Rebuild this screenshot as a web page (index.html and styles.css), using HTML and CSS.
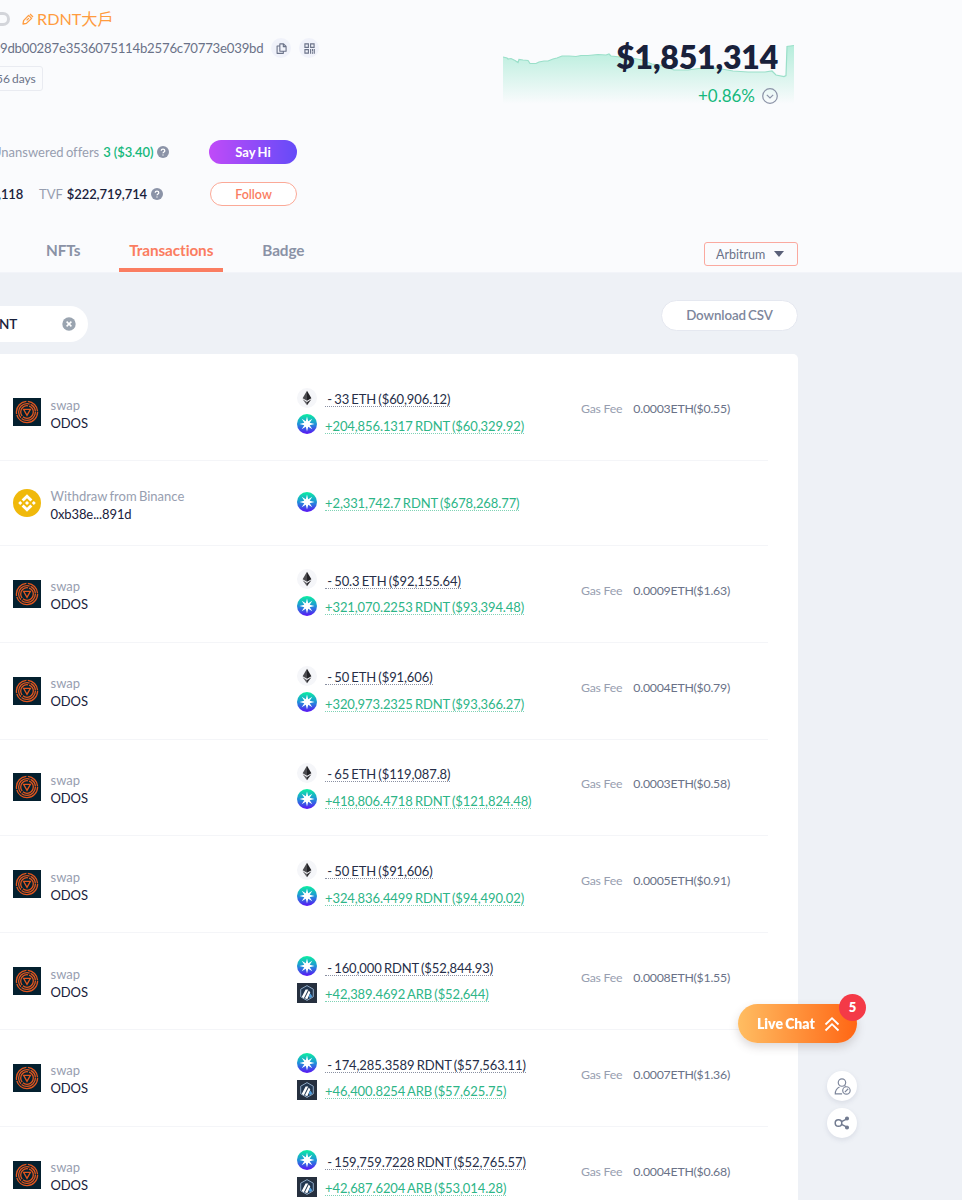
FILE: index.html
```
<!DOCTYPE html>
<html lang="en">
  <head>
    <meta charset="utf-8" />
    <link rel="stylesheet" href="styles.css">
    <title>Transactions</title>
  </head>
  <body>
    <svg class="sprite" aria-hidden="true">
      <defs>
        <linearGradient id="rdnt-bg" x1="0" y1="0" x2="0" y2="1">
          <stop offset="0" stop-color="#0bf0a0" />
          <stop offset="0.5" stop-color="#1f92d8" />
          <stop offset="1" stop-color="#5a12f5" />
        </linearGradient>
        <symbol id="odos" viewBox="0 0 28 28">
          <rect width="28" height="28" fill="#04202f" />
          <g fill="none" stroke="#e0561f" stroke-width="1.3">
            <circle cx="14" cy="14" r="10.6" stroke-dasharray="30 1 18 1.5 15 1" />
            <circle cx="14" cy="14" r="8.4" stroke-dasharray="19 1 22 1 9 1" />
            <circle cx="14" cy="14" r="6.3" stroke-dasharray="14 1 15 1 8 1" />
            <path d="M10.6 11.4h6.8L14 17.4z" />
          </g>
        </symbol>
        <symbol id="binance" viewBox="0 0 28 28">
          <circle cx="14" cy="14" r="14" fill="#f0b90b" />
          <path fill="#fff" d="M14 5.2l5.4 5.4-2 2L14 9.2l-3.4 3.4-2-2zM14 22.8l-5.4-5.4 2-2 3.4 3.4 3.4-3.4 2 2zM7.2 12L9.2 14l-2 2-2-2zM20.8 12l2 2-2 2-2-2zM14 12l2 2-2 2-2-2z" />
        </symbol>
        <symbol id="eth" viewBox="0 0 20 20">
          <circle cx="10" cy="10" r="10" fill="#f5f6f9" />
          <path fill="#4b4b4f" d="M10 2.8L5.6 10.2 10 12.8z" />
          <path fill="#222226" d="M10 2.8l4.4 7.4L10 12.8z" />
          <path fill="#66666a" d="M5.6 11.3L10 17.3v-3.4z" />
          <path fill="#303034" d="M14.4 11.3L10 17.3v-3.4z" />
        </symbol>
        <symbol id="rdnt" viewBox="0 0 20 20">
          <circle cx="10" cy="10" r="10" fill="url(#rdnt-bg)" />
          <path fill="#fff" d="M10 2.5l1.2 4.8 4.1-2.6-2.6 4.1 4.8 1.2-4.8 1.2 2.6 4.1-4.1-2.6L10 17.5l-1.2-4.8-4.1 2.6 2.6-4.1L2.5 10l4.8-1.2-2.6-4.1 4.1 2.6z" />
        </symbol>
        <symbol id="arb" viewBox="0 0 20 20">
          <rect width="20" height="20" fill="#26303f" />
          <path d="M10 2.6l6.3 3.6v7.6L10 17.4l-6.3-3.6V6.2z" fill="#22364f" stroke="#8fa9c4" stroke-width="1" />
          <path d="M8.6 6.6h2.6L6.9 15.2l-2.2-1.1zM11.8 7.4l1.5 2-3 6.8-2.4-1z" fill="#fff" />
          <path d="M13.4 10.4l2 3.2-2.6 1.7-1-2z" fill="#4f9fe0" />
        </symbol>
        <symbol id="help" viewBox="0 0 12 12">
          <circle cx="6" cy="6" r="6" fill="#8b93a7" />
          <path d="M4.2 4.8c0-2.3 3.6-2.3 3.6 0C7.8 6 6 6 6 7.3M6 8.4v1.2" fill="none" stroke="#fff" stroke-width="1.3" />
        </symbol>
      </defs>
    </svg>

    <header class="header">
      <div class="profile">
        <div class="name-row">
          <span class="id-tag"></span>
          <svg class="edit-icon" viewBox="0 0 12 12" fill="none" stroke="#ff9c3f" stroke-width="1.3" stroke-linejoin="round">
            <path d="M1 11l.6-3.4L6.6 2.4l3 3L4.4 10.4zM4.6 7.4l2.3-2.3M8 1l3 3" />
          </svg>
          <span class="nickname">RDNT大戶</span>
        </div>
        <div class="address-row">
          <span class="address">9db00287e3536075114b2576c70773e039bd</span>
          <span class="round-icon">
            <svg viewBox="0 0 12 12" width="11" height="11" fill="none" stroke="#6a7288" stroke-width="1.2" stroke-linejoin="round">
              <path d="M4.2 1h4L11 3.7V9H4.2zM8 1v3h3M4.2 3.2H1.2V11.3H8V9" />
            </svg>
          </span>
          <span class="round-icon">
            <svg viewBox="0 0 12 12" width="11" height="11" fill="none" stroke="#6a7288" stroke-width="1.2">
              <path d="M1 1h3.8v3.8H1zM7.2 1H11v3.8H7.2zM1 7.2h3.8V11H1zM7.2 6.6V11.6M9.3 6.6v2.6M9.3 10.2v1.4M11.2 6.6v5" />
            </svg>
          </span>
        </div>
        <div class="days">56 days</div>
        <div class="stat-row offers">
          <span class="stat-label">Unanswered offers</span>
          <span class="stat-value green">3 ($3.40)</span>
          <svg class="help"><use href="#help" /></svg>
          <button class="btn say-hi">Say Hi</button>
        </div>
        <div class="stat-row tvf">
          <span class="stat-value followers">,118</span>
          <span class="stat-label">TVF</span>
          <span class="stat-value">$222,719,714</span>
          <svg class="help"><use href="#help" /></svg>
          <button class="btn follow">Follow</button>
        </div>
      </div>

      <div class="balance">
        <svg class="chart" viewBox="0 0 291 65">
          <defs>
            <linearGradient id="area" x1="0" y1="0" x2="0" y2="1">
              <stop offset="0" stop-color="#b5eddb" />
              <stop offset="1" stop-color="#fafbfd" />
            </linearGradient>
          </defs>
          <path fill="url(#area)" d="M0 17l4 1 1 1 3-.5 4 2 3 2 1-3 4 .5 5 .5 2 3 6 0 3-1.5 5-1 4 0 5-2 4-1 5-2 7 0 7 .5 5-1 7 0 10-1 8 .5 3-1 2 2 9 1 12 1 10 2 10 4 8 1 14 5 14 0 14-2 14 0 17 3 15 1 17 0 7-1 4 4 8 1.5 2-1 1-29 7-1V64H0z" />
          <path fill="none" stroke="#9adfc9" stroke-width="1.2" d="M0 17l4 1 1 1 3-.5 4 2 3 2 1-3 4 .5 5 .5 2 3 6 0 3-1.5 5-1 4 0 5-2 4-1 5-2 7 0 7 .5 5-1 7 0 10-1 8 .5 3-1 2 2 9 1 12 1 10 2 10 4 8 1 14 5 14 0 14-2 14 0 17 3 15 1 17 0 7-1 4 4 8 1.5 2-1 1-29 7-1" />
        </svg>
        <div class="total">$1,851,314</div>
        <div class="change">
          <span>+0.86%</span>
          <svg viewBox="0 0 16 16" width="16" height="16" fill="none" stroke="#8b93a7" stroke-width="1.2">
            <circle cx="8" cy="8" r="7.3" />
            <path d="M4.8 6.9L8 10l3.2-3.1" />
          </svg>
        </div>
      </div>

      <nav class="tabs">
        <a class="tab">NFTs</a>
        <a class="tab active">Transactions</a>
        <a class="tab">Badge</a>
        <div class="chain">Arbitrum <span class="caret"></span></div>
      </nav>
    </header>

    <main>
      <div class="toolbar">
        <div class="search">
          <span>NT</span>
          <svg viewBox="0 0 14 14" width="14" height="14">
            <circle cx="7" cy="7" r="6.7" fill="#9aa4b0" />
            <path d="M4.6 4.6l4.8 4.8M9.4 4.6L4.6 9.4" stroke="#fff" stroke-width="1.5" />
          </svg>
        </div>
        <button class="download">Download CSV</button>
      </div>

      <div class="list">
        <div class="row">
          <svg class="logo"><use href="#odos" /></svg>
          <div class="action"><span>swap</span><b>ODOS</b></div>
          <div class="tokens">
            <div class="token"><svg><use href="#eth" /></svg><span>&nbsp;- 33 ETH ($60,906.12)</span></div>
            <div class="token in"><svg><use href="#rdnt" /></svg><span>+204,856.1317 RDNT ($60,329.92)</span></div>
          </div>
          <div class="gas"><span>Gas Fee</span>0.0003ETH($0.55)</div>
        </div>
        <div class="row short">
          <svg class="logo"><use href="#binance" /></svg>
          <div class="action"><span>Withdraw from Binance</span><b>0xb38e...891d</b></div>
          <div class="tokens">
            <div class="token in"><svg><use href="#rdnt" /></svg><span>+2,331,742.7 RDNT ($678,268.77)</span></div>
          </div>
        </div>
        <div class="row">
          <svg class="logo"><use href="#odos" /></svg>
          <div class="action"><span>swap</span><b>ODOS</b></div>
          <div class="tokens">
            <div class="token"><svg><use href="#eth" /></svg><span>&nbsp;- 50.3 ETH ($92,155.64)</span></div>
            <div class="token in"><svg><use href="#rdnt" /></svg><span>+321,070.2253 RDNT ($93,394.48)</span></div>
          </div>
          <div class="gas"><span>Gas Fee</span>0.0009ETH($1.63)</div>
        </div>
        <div class="row">
          <svg class="logo"><use href="#odos" /></svg>
          <div class="action"><span>swap</span><b>ODOS</b></div>
          <div class="tokens">
            <div class="token"><svg><use href="#eth" /></svg><span>&nbsp;- 50 ETH ($91,606)</span></div>
            <div class="token in"><svg><use href="#rdnt" /></svg><span>+320,973.2325 RDNT ($93,366.27)</span></div>
          </div>
          <div class="gas"><span>Gas Fee</span>0.0004ETH($0.79)</div>
        </div>
        <div class="row">
          <svg class="logo"><use href="#odos" /></svg>
          <div class="action"><span>swap</span><b>ODOS</b></div>
          <div class="tokens">
            <div class="token"><svg><use href="#eth" /></svg><span>&nbsp;- 65 ETH ($119,087.8)</span></div>
            <div class="token in"><svg><use href="#rdnt" /></svg><span>+418,806.4718 RDNT ($121,824.48)</span></div>
          </div>
          <div class="gas"><span>Gas Fee</span>0.0003ETH($0.58)</div>
        </div>
        <div class="row">
          <svg class="logo"><use href="#odos" /></svg>
          <div class="action"><span>swap</span><b>ODOS</b></div>
          <div class="tokens">
            <div class="token"><svg><use href="#eth" /></svg><span>&nbsp;- 50 ETH ($91,606)</span></div>
            <div class="token in"><svg><use href="#rdnt" /></svg><span>+324,836.4499 RDNT ($94,490.02)</span></div>
          </div>
          <div class="gas"><span>Gas Fee</span>0.0005ETH($0.91)</div>
        </div>
        <div class="row">
          <svg class="logo"><use href="#odos" /></svg>
          <div class="action"><span>swap</span><b>ODOS</b></div>
          <div class="tokens">
            <div class="token"><svg><use href="#rdnt" /></svg><span>&nbsp;- 160,000 RDNT ($52,844.93)</span></div>
            <div class="token in"><svg><use href="#arb" /></svg><span>+42,389.4692 ARB ($52,644)</span></div>
          </div>
          <div class="gas"><span>Gas Fee</span>0.0008ETH($1.55)</div>
        </div>
        <div class="row">
          <svg class="logo"><use href="#odos" /></svg>
          <div class="action"><span>swap</span><b>ODOS</b></div>
          <div class="tokens">
            <div class="token"><svg><use href="#rdnt" /></svg><span>&nbsp;- 174,285.3589 RDNT ($57,563.11)</span></div>
            <div class="token in"><svg><use href="#arb" /></svg><span>+46,400.8254 ARB ($57,625.75)</span></div>
          </div>
          <div class="gas"><span>Gas Fee</span>0.0007ETH($1.36)</div>
        </div>
        <div class="row">
          <svg class="logo"><use href="#odos" /></svg>
          <div class="action"><span>swap</span><b>ODOS</b></div>
          <div class="tokens">
            <div class="token"><svg><use href="#rdnt" /></svg><span>&nbsp;- 159,759.7228 RDNT ($52,765.57)</span></div>
            <div class="token in"><svg><use href="#arb" /></svg><span>+42,687.6204 ARB ($53,014.28)</span></div>
          </div>
          <div class="gas"><span>Gas Fee</span>0.0004ETH($0.68)</div>
        </div>
      </div>
    </main>

    <div class="floating">
      <button class="chat">
        Live Chat
        <svg viewBox="0 0 16 16" width="16" height="16" fill="none" stroke="#fff" stroke-width="1.8">
          <path d="M1.5 8.5L8 2.2l6.5 6.3M1.5 14.5L8 8.2l6.5 6.3" />
        </svg>
        <span class="badge">5</span>
      </button>
      <button class="circle">
        <svg viewBox="0 0 16 16" width="17" height="17" fill="none" stroke="#7d869b" stroke-width="1.1">
          <circle cx="7.5" cy="4.3" r="3.5" />
          <path d="M7.6 15H1.2c0-3 1.3-5.4 4-6.6M10 7.2l1 .8" />
          <circle cx="11.7" cy="11.7" r="3.5" />
          <path d="M10.2 13.3l3.2-3.2" />
        </svg>
      </button>
      <button class="circle">
        <svg viewBox="0 0 16 16" width="16" height="16" fill="none" stroke="#727b90" stroke-width="1.5">
          <circle cx="4.5" cy="8" r="3.3" />
          <path d="M7.5 6.7L13 3.8M7.5 9.3l5.5 2.9" />
          <circle cx="13" cy="3.5" r="1.3" fill="#727b90" />
          <circle cx="13" cy="12.5" r="1.3" fill="#727b90" />
        </svg>
      </button>
    </div>
  </body>
</html>
```
FILE: styles.css
```
* {
  box-sizing: border-box;
}
body {
  margin: 0;
  height: 1200px;
  overflow: hidden;
  background-color: #eef1f6;
  color: #19213b;
  font-family: Lato, "Noto Sans CJK TC", sans-serif;
  font-size: 13.5px;
  font-variant-ligatures: none;
  word-spacing: -1px;
}
button {
  font-family: inherit;
  padding: 0;
  word-spacing: -1px;
  cursor: pointer;
}
.sprite {
  display: block;
  width: 0;
  height: 0;
}

.header {
  display: grid;
  grid-template-columns: 503px 291px;
  grid-template-rows: 229px 43px;
  height: 273px;
  background-color: #fafbfd;
  border-bottom: 1px solid #f2f4f9;
}
.name-row {
  display: flex;
  align-items: center;
  height: 38px;
}
.id-tag {
  width: 10px;
  height: 14px;
  border: 3px solid #d3d5da;
  border-left: 0;
  border-radius: 0 7px 7px 0;
}
.edit-icon {
  width: 12px;
  height: 12px;
  margin-left: 12px;
  margin-right: 3px;
}
.nickname {
  margin-top: -2px;
  font-size: 16.2px;
  color: #ff9c3f;
}
.address-row {
  display: flex;
  align-items: center;
  height: 20px;
  color: #6a7288;
}
.address {
  width: 271px;
  font-size: 13.2px;
  letter-spacing: -0.22px;
}
.round-icon {
  display: flex;
  align-items: center;
  justify-content: center;
  width: 20px;
  height: 20px;
  margin-right: 8px;
  border-radius: 50%;
  background-color: #f0f2fa;
}
.days {
  display: flex;
  align-items: center;
  width: 55px;
  height: 25px;
  margin: 8px 0 0 -12px;
  padding-left: 7px;
  border: 1px solid #e9ebf1;
  border-radius: 3px;
  font-size: 12px;
  color: #6a7288;
}
.stat-row {
  display: flex;
  align-items: center;
  width: 297px;
  height: 24px;
}
.offers {
  margin-top: 49px;
  margin-left: -8px;
  width: 305px;
}
.tvf {
  margin-top: 18px;
}
.stat-label {
  margin-right: 4px;
  font-size: 13px;
  color: #979eb0;
}
.stat-value {
  font-size: 13px;
  font-weight: 600;
  letter-spacing: -0.1px;
}
.followers {
  width: 41px;
  margin-left: -2px;
}
.green {
  color: #15b87c;
  word-spacing: 0;
}
.help {
  width: 12px;
  height: 12px;
  margin-left: 4px;
}
.btn {
  width: 88px;
  height: 24px;
  margin-left: auto;
  border: 0;
  border-radius: 12px;
  font-size: 13px;
  font-weight: 700;
}
.say-hi {
  color: #fff;
  background: linear-gradient(90deg, #c04bf8, #654bf8);
}
.follow {
  width: 87px;
  color: #fa7d61;
  background-color: #fff;
  border: 1px solid #fba997;
  font-size: 12.5px;
  font-weight: 600;
}

.balance {
  position: relative;
  padding: 36px 16px 0 0;
  text-align: right;
}
.chart {
  position: absolute;
  top: 40px;
  left: 0;
  width: 291px;
  height: 65px;
}
.total {
  position: relative;
  height: 42px;
  line-height: 42px;
  font-size: 32px;
  font-weight: 800;
  letter-spacing: -0.2px;
}
.change {
  position: relative;
  display: flex;
  align-items: center;
  justify-content: flex-end;
  gap: 7px;
  height: 35px;
  font-size: 17px;
  color: #15b87c;
}

.tabs {
  grid-column: 1 / 3;
  display: flex;
  width: 798px;
  padding-left: 36px;
}
.tab {
  height: 43px;
  margin-right: 29px;
  padding: 0 10px;
  line-height: 43px;
  font-size: 15.3px;
  font-weight: 700;
  letter-spacing: -0.1px;
  color: #8a92a6;
}
.active {
  color: #fa7d61;
  border-bottom: 4px solid #fa7d61;
}
.chain {
  display: flex;
  align-items: center;
  justify-content: space-between;
  width: 94px;
  height: 24px;
  margin: 13px 0 0 auto;
  padding: 0 13px 0 11px;
  border: 1px solid #faa99f;
  border-radius: 3px;
  font-size: 12.5px;
  color: #6a7288;
}
.caret {
  border: 5.5px solid transparent;
  border-top: 6px solid #596078;
  border-bottom: 0;
}

.toolbar {
  display: flex;
  justify-content: space-between;
  width: 798px;
  height: 81px;
  padding-top: 27px;
}
.search {
  display: flex;
  align-items: center;
  justify-content: space-between;
  width: 89px;
  height: 36px;
  margin-top: 6px;
  margin-left: -1px;
  padding-right: 12px;
  border-radius: 0 18px 18px 0;
  background-color: #fff;
  font-weight: 600;
}
.download {
  width: 137px;
  height: 31px;
  padding-bottom: 2px;
  border: 1px solid #e5e8f0;
  border-radius: 16px;
  background-color: #fff;
  color: #7d869b;
  font-size: 13.3px;
  font-weight: 600;
  letter-spacing: -0.1px;
}

.list {
  width: 798px;
  padding: 10.5px 30px 0 0;
  border-radius: 0 5px 0 0;
  background-color: #fff;
}
.row {
  display: grid;
  grid-template-columns: 28px 246.5px 284px 187px;
  align-items: center;
  height: 96.85px;
  padding-left: 13px;
  border-bottom: 1px solid #f4f5f8;
}
.short {
  height: 84.5px;
}
.logo {
  width: 28px;
  height: 28px;
}
.action {
  padding: 3px 0 0 9.5px;
  font-size: 13px;
  line-height: 18px;
}
.action span,
.action b {
  display: block;
  font-weight: 400;
}
.action b {
  letter-spacing: -0.1px;
}
.action span {
  color: #979eb0;
}
.tokens {
  padding: 0 0 1.5px 9.5px;
}
.token {
  display: flex;
  gap: 8px;
  height: 26.5px;
}
.token svg {
  flex: none;
  width: 20px;
  height: 20px;
  margin-top: 2.5px;
}
.token span {
  height: 16px;
  margin-top: 6px;
  line-height: 17px;
  font-size: 13px;
  letter-spacing: -0.1px;
  word-spacing: -1px;
  white-space: nowrap;
  color: #262e48;
  border-bottom: 1px dotted #8a90a2;
}
.in span {
  color: #2db587;
  border-bottom-color: #7fd2b5;
}
.gas {
  padding: 0 0 7px 9.5px;
  font-size: 12.3px;
  letter-spacing: -0.23px;
  color: #6a7288;
}
.gas span {
  margin-right: 11px;
  word-spacing: 0;
  color: #979eb0;
}

.floating {
  position: fixed;
  top: 1004px;
  left: 738px;
  display: flex;
  flex-direction: column;
  align-items: flex-end;
  width: 119px;
}
.chat {
  position: relative;
  display: flex;
  align-items: center;
  gap: 9px;
  width: 119px;
  height: 39px;
  margin-bottom: 28px;
  padding-left: 19px;
  border: 0;
  border-radius: 20px;
  background: linear-gradient(90deg, #ffbd62, #ff6614);
  box-shadow: 0 4px 10px rgba(80, 60, 60, 0.2);
  color: #fff;
  font-size: 14px;
  font-weight: 800;
}
.badge {
  position: absolute;
  top: -10px;
  right: -9px;
  width: 27px;
  height: 27px;
  line-height: 27px;
  border-radius: 50%;
  background-color: #f43a47;
  font-size: 13px;
}
.circle {
  display: flex;
  align-items: center;
  justify-content: center;
  width: 30px;
  height: 30px;
  margin-bottom: 7px;
  border: 0;
  border-radius: 50%;
  background-color: #fff;
  box-shadow: 0 2px 5px rgba(100, 110, 140, 0.15);
}
```
